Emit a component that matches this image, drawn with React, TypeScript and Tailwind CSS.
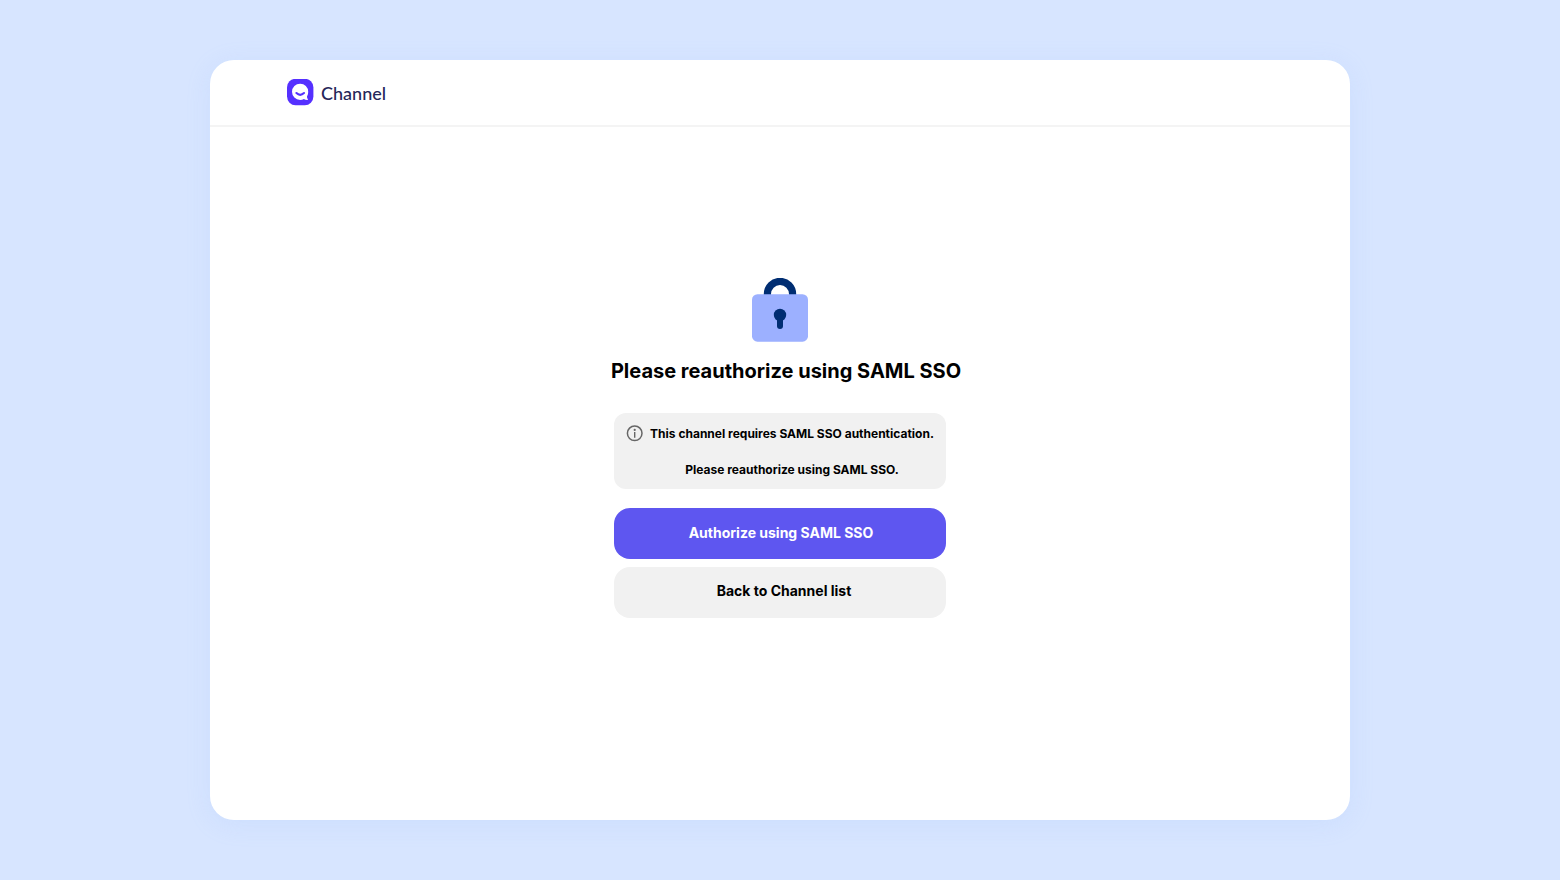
function ChannelLogo() {
  return (
    <a href="#" className="flex items-center gap-[7px]">
      <svg width="27" height="27" viewBox="0 0 27 27" aria-hidden="true">
        <rect x="0" y="-0.2" width="26.4" height="26.400" rx="8.6" fill="#5530ff" />
        <path
          d="M13.100 4.700a8.100 8.100 0 1 0 0 16.200c1.500 0 2.700-.3 3.800-.9.900.7 2 1 3.300 1 .7 0 .9-.5.5-1-.5-.6-.8-1.600-.7-2.500a8 8 0 0 0 1.200-4.700a8 8 0 0 0-8.100-8.100z"
          fill="#fff"
        />
        <path d="M9.400 14q3.800 3.600 7.600 0" fill="none" stroke="#5530ff" strokeWidth="2.100" strokeLinecap="round" />
      </svg>
      <span className="font-[Lato,sans-serif] text-lg leading-6 font-medium text-[#252659]">Channel</span>
    </a>
  );
}

function LockIllustration() {
  return (
    <svg width="56" height="64" viewBox="0 0 56 64" aria-hidden="true">
      <path d="M11.800 17v-1a16.200 16.200 0 0 1 32.400 0v1h-7.200v-1a9 9 0 0 0-18 0v1z" fill="#002d72" />
      <rect y="16.200" width="56" height="47.500" rx="5.500" fill="#9cb0ff" />
      <circle cx="28" cy="37" r="6.200" fill="#002d72" />
      <path d="M28 38v10" stroke="#002d72" strokeWidth="6" strokeLinecap="round" />
    </svg>
  );
}

function InfoIcon() {
  return (
    <svg width="17" height="17" viewBox="0 0 17 17" className="shrink-0" aria-hidden="true">
      <circle cx="8.700" cy="8.300" r="7.300" fill="none" stroke="#666" strokeWidth="1.500" />
      <circle cx="8.700" cy="4.900" r="1.100" fill="#666" />
      <path d="M8.700 6.900v5.900" stroke="#666" strokeWidth="1.400" />
    </svg>
  );
}

export default function App() {
  return (
    <div className="flex min-h-screen justify-center bg-[#d7e5ff] px-6 py-[60px] font-[Inter,sans-serif] text-black">
      <div className="flex w-full max-w-[1140px] flex-col rounded-3xl bg-white shadow-[0_4px_24px_rgba(150,185,250,0.16)]">
        <header className="flex h-[67px] items-center border-b-2 border-[#f4f4f4] pl-[77px]">
          <ChannelLogo />
        </header>
        <main className="flex flex-col items-center px-6 pt-[151px] pb-16">
          <LockIllustration />
          <h1 className="mt-[15px] pl-3 text-center text-xl leading-7 font-bold">Please reauthorize using SAML SSO</h1>
          <div className="mt-7 flex w-full max-w-[332px] flex-col">
            <div className="flex gap-[7px] rounded-xl bg-[#f1f1f1] px-3 pt-3 pb-[10px] text-xs leading-[18px] font-bold">
              <InfoIcon />
              <div className="flex flex-1 flex-col gap-[18px] text-center">
                <p>This channel requires SAML SSO authentication.</p>
                <p>Please reauthorize using SAML SSO.</p>
              </div>
            </div>
            <button type="button" className="mt-[19px] h-[51px] rounded-2xl bg-[#5e56f0] pb-[2px] pl-[2px] text-sm font-bold text-white">
              Authorize using SAML SSO
            </button>
            <button type="button" className="mt-2 h-[51px] rounded-2xl bg-[#f1f1f1] pb-[3px] pl-2 text-sm font-bold">
              Back to Channel list
            </button>
          </div>
        </main>
      </div>
    </div>
  );
}
